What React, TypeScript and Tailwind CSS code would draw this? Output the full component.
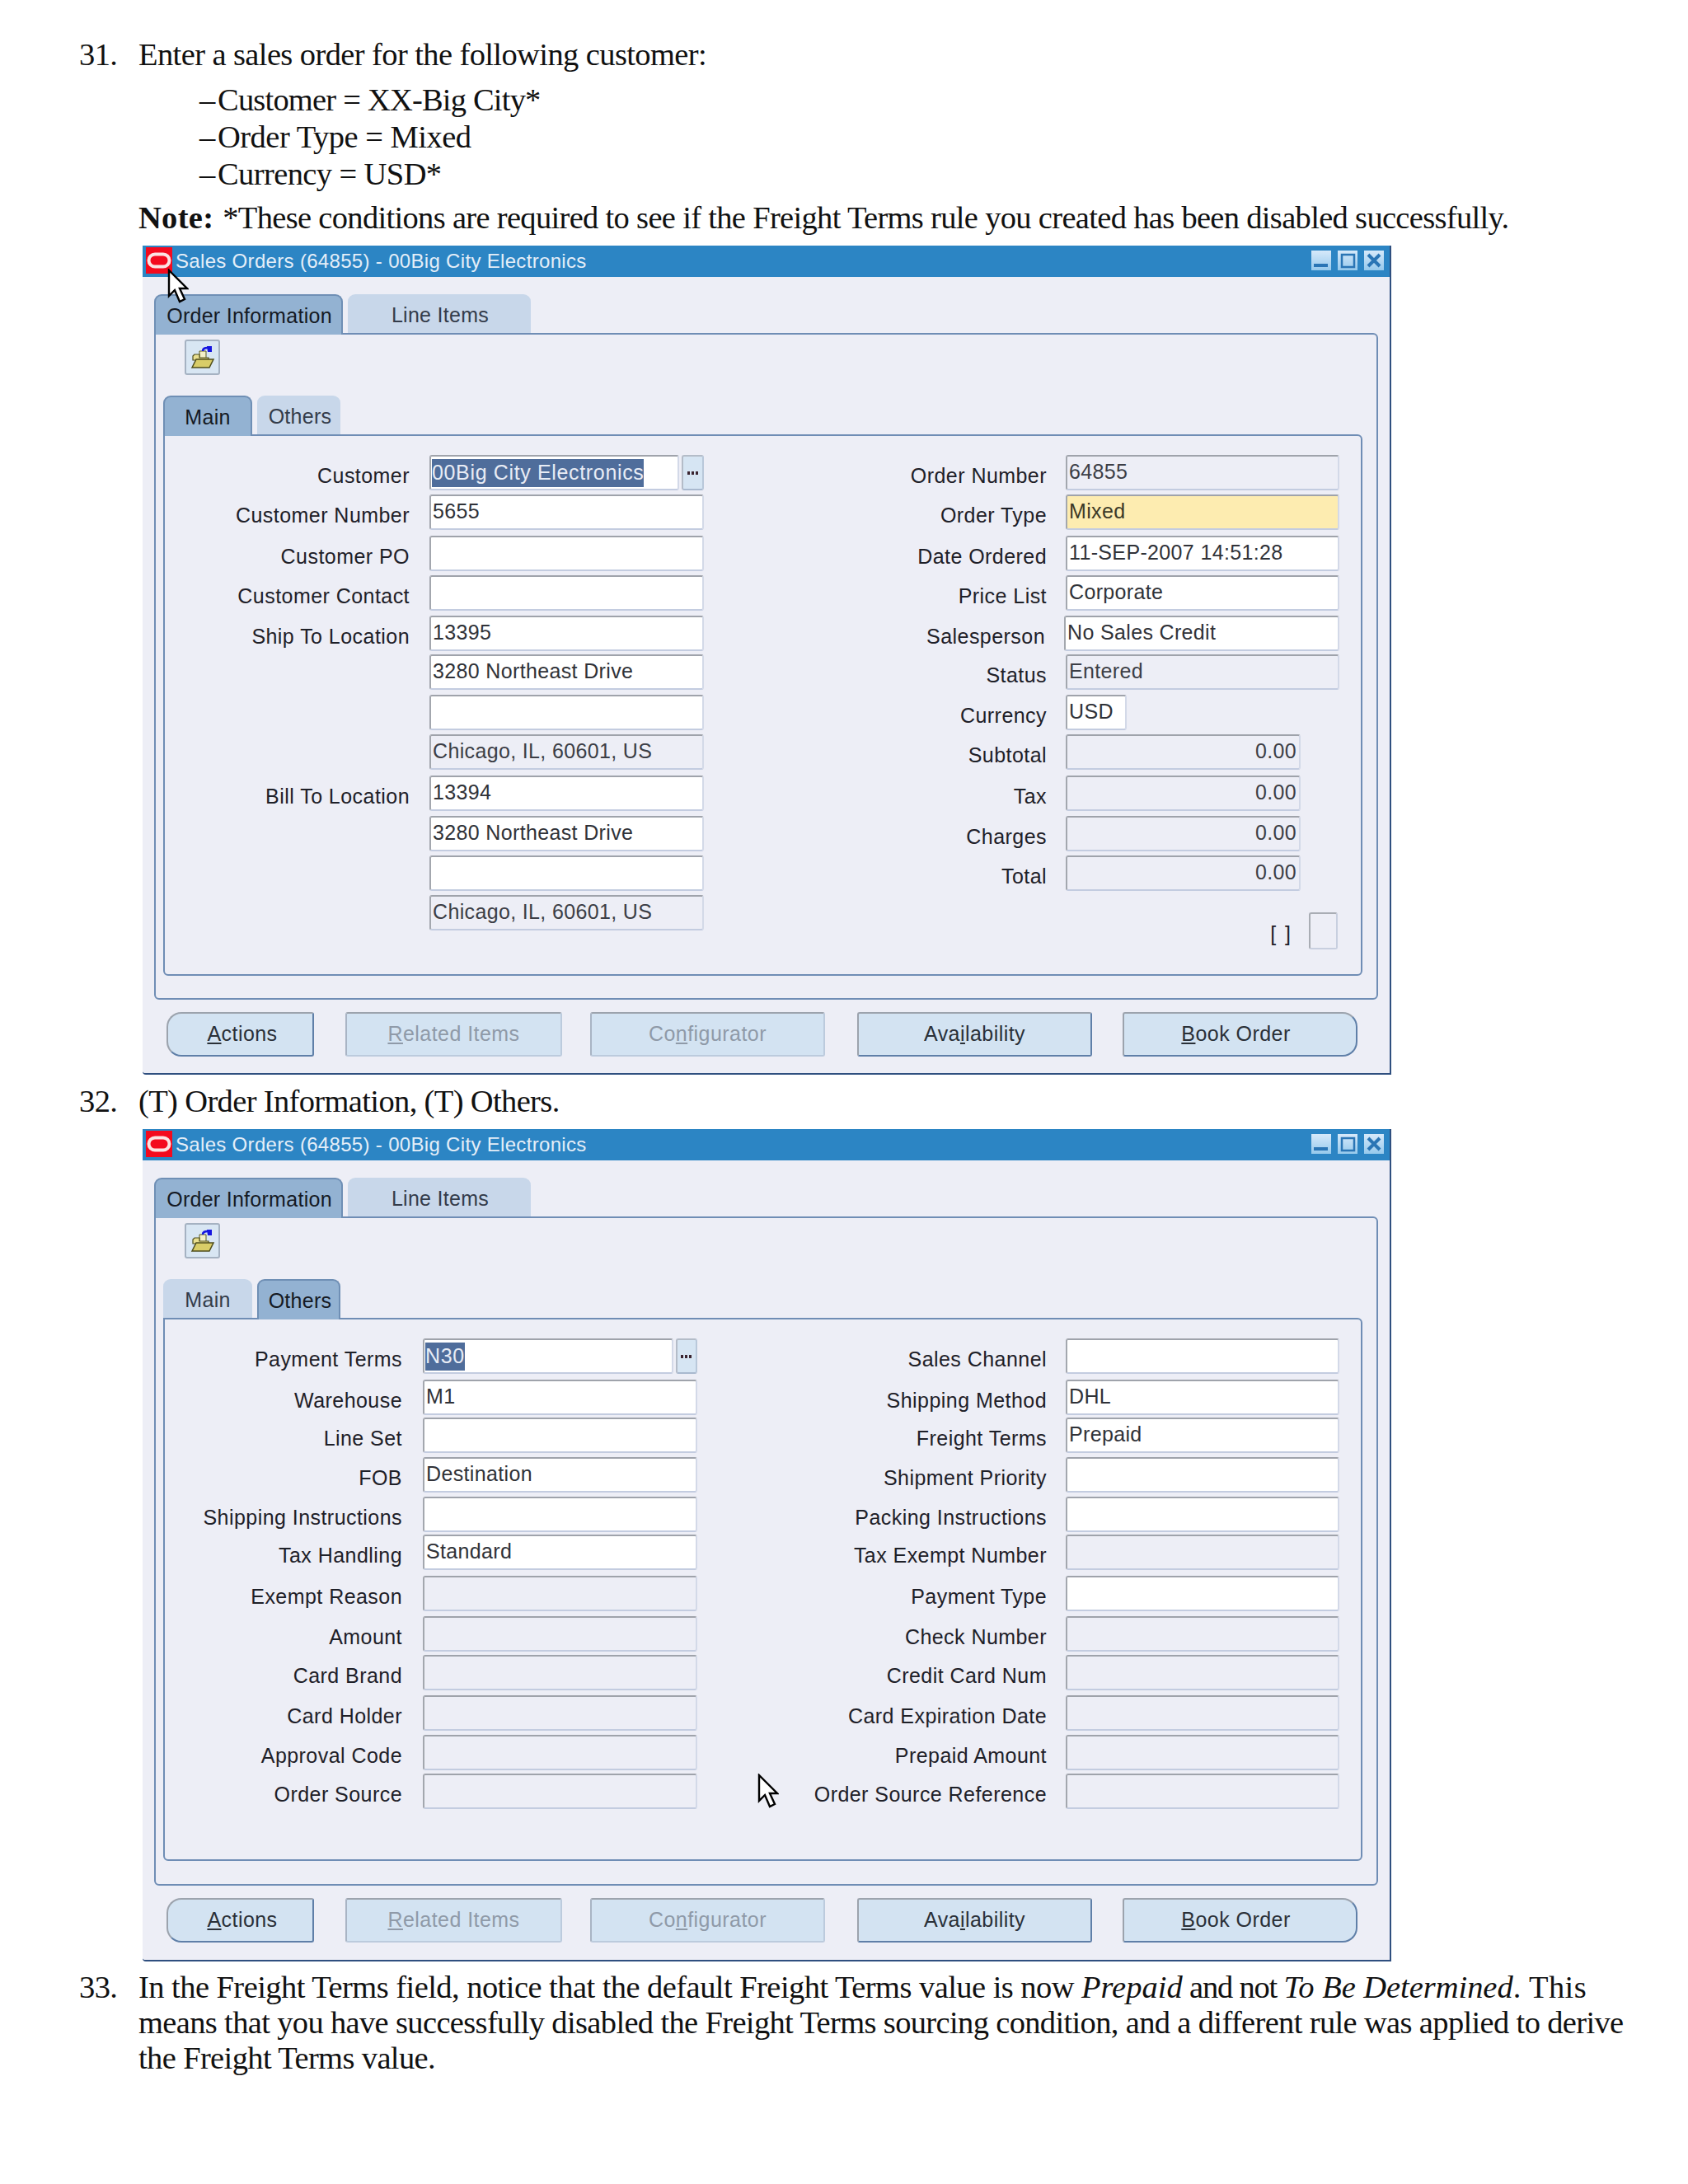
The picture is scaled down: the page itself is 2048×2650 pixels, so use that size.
import React from "react";

type Kind = "edit" | "ro" | "req" | "sel" | "plain";
type Row = { label?: string; value?: string; kind?: Kind; w?: string; right?: boolean; lov?: string; labelX?: string };

const gaps1 = ["mt-0", "mt-[5px]", "mt-[7px]", "mt-[5px]", "mt-[6px]", "mt-[4px]", "mt-[6px]", "mt-[5px]", "mt-[7px]", "mt-[6px]", "mt-[5px]", "mt-[5px]"];
const gaps2 = ["mt-0", "mt-[7px]", "mt-[3px]", "mt-[5px]", "mt-[5px]", "mt-[3px]", "mt-[7px]", "mt-[6px]", "mt-[4px]", "mt-[6px]", "mt-[5px]", "mt-[4px]"];

const fieldBase = "h-[43px] shrink-0 flex items-center border-2 border-t-[#9fa3ab] border-l-[#a3a7ae] border-r-[#d3d9e8] border-b-[#c3cce0] rounded-[3px]";
const kindBg: Record<Kind, string> = {
  edit: "bg-white text-[#303238]",
  ro: "bg-[#edeef6] text-[#3c3e46]",
  req: "bg-[#fdecb0] text-[#3c3a28]",
  sel: "bg-white text-[#e8ecf5]",
  plain: "bg-white",
};

function Field({ row, defW }: { row: Row; defW: string }) {
  const kind = row.kind ?? "edit";
  if (row.lov) {
    return (
      <div className={`flex ${defW} shrink-0 gap-[3px]`}>
        <div className={`${fieldBase} ${kindBg[kind]} ${row.lov} pl-[1px]`}>
          <span className="bg-[#4f6d9b] h-[34px] leading-[32px] tracking-[0.65px]">{row.value}</span>
        </div>
        <div className="h-[43px] flex-1 flex items-center justify-center bg-[#d6e5f3] border-2 border-t-[#b4bcc8] border-l-[#b4bcc8] border-r-[#b9c8da] border-b-[#a9b9cf] rounded-[3px]">
          <svg width="14" height="4" viewBox="0 0 14 4"><rect x="0" width="3" height="4" fill="#3a2430" /><rect x="5" width="3" height="4" fill="#3a2430" /><rect x="10" width="3" height="4" fill="#3a2430" /></svg>
        </div>
      </div>
    );
  }
  return (
    <div className={`${fieldBase} ${kindBg[kind]} ${row.w ?? defW} ${row.right ? "justify-end pr-[3px]" : "pl-[2px]"}`}>
      <span className="-mt-[1px] tracking-[0.35px]">{row.value}</span>
    </div>
  );
}

function Column({ rows, labelW, gap, fieldW, gaps }: { rows: Row[]; labelW: string; gap: string; fieldW: string; gaps: string[] }) {
  return (
    <div className="flex flex-col">
      {rows.map((r, i) => (
        <div key={i} className={`flex ${gap} ${gaps[i]}`}>
          <div className={`${labelW} text-right pt-[10px] leading-[30px] text-[#1e2028] tracking-[0.45px] whitespace-nowrap ${r.labelX ?? ""}`}>{r.label}</div>
          <Field row={r} defW={fieldW} />
        </div>
      ))}
    </div>
  );
}

function TabShape({ active, className, text, children }: { active?: boolean; className: string; text?: string; children: React.ReactNode }) {
  return (
    <div
      className={`${className} flex items-center justify-center rounded-t-[9px] border-t-2 tracking-[0.28px] pt-[2px] ${
        active
          ? "bg-[#93b2d2] border-[#6f8fb5] border-x-2 text-[#151a24] relative z-10 -mb-[2px]"
          : "bg-[#c8d7ea] border-[#c8d7ea] text-[#343c4a]"
      }`}
    >
      <span className={text ?? ""}>{children}</span>
    </div>
  );
}

function Folder() {
  return (
    <svg width="30" height="30" viewBox="0 0 30 30">
      <path d="M11 16 L11 7 L19 7 L19 16 Z" fill="#f4f0c8" stroke="#5b5a20" strokeWidth="1" />
      <path d="M15 7 C15 4 17 3 21 3" fill="none" stroke="#1616e0" strokeWidth="2.6" />
      <path d="M20 1 H26 V8 H21 Z" fill="#1616e0" />
      <path d="M3 13 L5 11 H11 V15 H22 V18 H3 Z" fill="#e9df90" stroke="#4f4e1c" strokeWidth="1.2" />
      <path d="M2 27 L7 17 H28 L23 27 Z" fill="#d9cd68" stroke="#4f4e1c" strokeWidth="1.5" />
    </svg>
  );
}

function Oracle() {
  return (
    <div className="w-[32px] h-[32px] mt-[2px] ml-[4px] bg-[#f40a1e] flex items-center justify-center shrink-0">
      <svg width="30" height="22" viewBox="0 0 30 22">
        <rect x="2.5" y="3.5" width="25" height="15" rx="7.5" fill="none" stroke="#fbe3e3" strokeWidth="4" />
      </svg>
    </div>
  );
}

function WinBtn({ type }: { type: "min" | "max" | "close" }) {
  return (
    <div className="w-[24px] h-[24px] bg-gradient-to-b from-[#d6e9fa] to-[#96c9ec] flex items-center justify-center">
      <svg width="24" height="24" viewBox="0 0 24 24">
        {type === "min" && <rect x="3" y="16" width="17" height="4" fill="#2a75b5" />}
        {type === "max" && <rect x="5" y="5" width="15" height="15" fill="none" stroke="#2a75b5" strokeWidth="2.5" />}
        {type === "close" && <path d="M5 5 L19 19 M19 5 L5 19" stroke="#2a75b5" strokeWidth="4" />}
      </svg>
    </div>
  );
}

function Btn({ w, shape, disabled, text, children }: { w: string; shape?: string; disabled?: boolean; text?: string; children: React.ReactNode }) {
  return (
    <div
      className={`${w} h-[54px] shrink-0 flex items-center justify-center bg-[#d3e3f2] border-2 rounded-[3px] tracking-[0.45px] ${shape ?? ""} ${
        disabled
          ? "text-[#8f9aa8] border-[#a9b4c4] border-t-[#9ca3ad] border-r-[#bccbdd] border-b-[#bccbdd]"
          : "text-[#2a3038] border-t-[#9ca3ad] border-l-[#9ca3ad] border-r-[#5f7fa8] border-b-[#5f7fa8]"
      }`}
    >
      <span className={`-mt-[1px] ${text ?? ""}`}>{children}</span>
    </div>
  );
}

function Cursor({ className }: { className: string }) {
  return (
    <svg className={`absolute z-20 ${className}`} width="26" height="44" viewBox="0 0 26 44">
      <path d="M2 2 V33 L9 26 L15 40 L21 37 L15 24 L24 24 Z" fill="#fff" stroke="#000" strokeWidth="2.4" strokeLinejoin="miter" />
    </svg>
  );
}

function Win({
  others, left, right, labelW, gap, panelH, outerH, cursor, height, gaps,
}: {
  others?: boolean; left: Row[]; right: Row[]; labelW: string; gap: string; panelH: string; outerH: string; cursor: string; height: string; gaps: string[];
}) {
  return (
    <div className={`relative ml-[173px] w-[1515px] ${height} bg-[#edeef6] border-r-2 border-b-2 border-r-[#2f4f7f] border-b-[#2f4f7f] rounded-bl-[4px] flex flex-col`}>
      <div className="h-[38px] shrink-0 bg-[#2c85c4] flex items-start">
        <Oracle />
        <div className="ml-[4px] mt-[5px] leading-[28px] text-[24px] text-[#e4eef8] tracking-[0.32px] whitespace-nowrap">
          Sales Orders (64855) - 00Big City Electronics
        </div>
        <div className="ml-auto mt-[6px] mr-[7px] flex gap-[8px]">
          <WinBtn type="min" />
          <WinBtn type="max" />
          <WinBtn type="close" />
        </div>
      </div>

      <div className="mx-[14px] mt-[21px] h-[47px] flex gap-[6px] shrink-0">
        <TabShape active className="w-[229px]" text="ml-[2px]">Order Information</TabShape>
        <TabShape className="w-[222px]" text="ml-[2px]">Line Items</TabShape>
      </div>

      <div className={`mx-[14px] ${outerH} border-2 border-[#6f8db5] rounded-b-[6px] rounded-tr-[6px] flex flex-col`}>
        <div className="ml-[35px] mt-[6px] w-[43px] h-[43px] shrink-0 bg-[#d8e6f3] border-2 border-[#a5b2c2] rounded-[3px] flex items-center justify-center">
          <Folder />
        </div>
        <div className="ml-[9px] mt-[25px] h-[47px] flex gap-[6px] shrink-0">
          <TabShape active={!others} className="w-[108px]">Main</TabShape>
          <TabShape active={others} className="w-[101px]" text="ml-[3px]">Others</TabShape>
        </div>
        <div className={`ml-[9px] mr-[17px] ${panelH} border-2 border-[#6f8db5] rounded-b-[6px] rounded-tr-[6px] pt-[23px] pr-[26px] flex justify-between`}>
          <Column rows={left} labelW={labelW} gap={gap} fieldW="w-[333px]" gaps={gaps} />
          <div className="flex flex-col items-end">
            <Column rows={right} labelW="w-[400px]" gap="gap-[23px]" fieldW="w-[332px]" gaps={gaps} />
            {!others && (
              <div className="mt-[26px] mr-[2px] flex items-center gap-[20px] ">
                <span className="pt-[8px] tracking-[2px] text-[#1e2028]">[ ]</span>
                <div className="w-[35px] h-[45px] border-2 border-t-[#a9adb4] border-l-[#a9adb4] border-r-[#c8cfdf] border-b-[#c8cfdf] rounded-[3px]" />
              </div>
            )}
          </div>
        </div>
      </div>

      <div className="mx-[29px] mt-[15px] flex justify-between pr-[10px]">
        <Btn w="w-[179px]" shape="rounded-l-[18px]" text="ml-[5px]"><u>A</u>ctions</Btn>
        <Btn w="w-[263px] ml-[38px]" disabled><u>R</u>elated Items</Btn>
        <Btn w="w-[285px] ml-[34px]" disabled>Co<u>n</u>figurator</Btn>
        <Btn w="w-[285px] ml-[39px]">Ava<u>i</u>lability</Btn>
        <Btn w="w-[285px] ml-[37px]" shape="rounded-r-[18px]" text="mr-[10px]"><u>B</u>ook Order</Btn>
      </div>
      <Cursor className={cursor} />
    </div>
  );
}

const win1L: Row[] = [
  { label: "Customer", value: "00Big City Electronics", kind: "sel", lov: "w-[303px]" },
  { label: "Customer Number", value: "5655" },
  { label: "Customer PO" },
  { label: "Customer Contact" },
  { label: "Ship To Location", value: "13395" },
  { value: "3280 Northeast Drive" },
  {},
  { value: "Chicago, IL, 60601, US", kind: "ro" },
  { label: "Bill To Location", value: "13394" },
  { value: "3280 Northeast Drive" },
  {},
  { value: "Chicago, IL, 60601, US", kind: "ro" },
];
const win1R: Row[] = [
  { label: "Order Number", value: "64855", kind: "ro" },
  { label: "Order Type", value: "Mixed", kind: "req" },
  { label: "Date Ordered", value: "11-SEP-2007 14:51:28" },
  { label: "Price List", value: "Corporate" },
  { label: "Salesperson", value: "No Sales Credit", labelX: "-ml-[2px]", w: "w-[334px]" },
  { label: "Status", value: "Entered", kind: "ro" },
  { label: "Currency", value: "USD", w: "w-[74px] mr-[258px]" },
  { label: "Subtotal", value: "0.00", kind: "ro", w: "w-[285px] mr-[47px]", right: true },
  { label: "Tax", value: "0.00", kind: "ro", w: "w-[285px] mr-[47px]", right: true },
  { label: "Charges", value: "0.00", kind: "ro", w: "w-[285px] mr-[47px]", right: true },
  { label: "Total", value: "0.00", kind: "ro", w: "w-[285px] mr-[47px]", right: true },
];
const win2L: Row[] = [
  { label: "Payment Terms", value: "N30", kind: "sel", lov: "w-[304px]" },
  { label: "Warehouse", value: "M1" },
  { label: "Line Set" },
  { label: "FOB", value: "Destination" },
  { label: "Shipping Instructions" },
  { label: "Tax Handling", value: "Standard" },
  { label: "Exempt Reason", kind: "ro" },
  { label: "Amount", kind: "ro" },
  { label: "Card Brand", kind: "ro" },
  { label: "Card Holder", kind: "ro" },
  { label: "Approval Code", kind: "ro" },
  { label: "Order Source", kind: "ro" },
];
const win2R: Row[] = [
  { label: "Sales Channel" },
  { label: "Shipping Method", value: "DHL" },
  { label: "Freight Terms", value: "Prepaid" },
  { label: "Shipment Priority" },
  { label: "Packing Instructions" },
  { label: "Tax Exempt Number", kind: "ro" },
  { label: "Payment Type" },
  { label: "Check Number", kind: "ro" },
  { label: "Credit Card Num", kind: "ro" },
  { label: "Card Expiration Date", kind: "ro" },
  { label: "Prepaid Amount", kind: "ro" },
  { label: "Order Source Reference", kind: "ro" },
];

const line = "flex leading-[45px] whitespace-nowrap";
const serif = "[font-family:'Liberation_Serif',serif]";
const num = "w-[168px] pl-[96px] shrink-0 tracking-[-0.6px]";
const dash = "w-[22px] shrink-0";

export default function App() {
  return (
    <div className="w-[2048px] h-[2650px] bg-white text-[#111] overflow-hidden [font-family:'Liberation_Sans',Arial,sans-serif] text-[25px]">
      <div className={`${serif} text-[38.5px] pt-[44px]`}>
        <div className={line}>
          <span className={num}>31.</span>
          <span className="tracking-[-0.6px]">Enter a sales order for the following customer:</span>
        </div>
        <div className={`${line} pl-[242px] mt-[10px]`}><span className={dash}>–</span><span className="tracking-[-0.8px]">Customer = XX-Big City*</span></div>
        <div className={`${line} pl-[242px]`}><span className={dash}>–</span><span className="tracking-[-0.5px]">Order Type = Mixed</span></div>
        <div className={`${line} pl-[242px]`}><span className={dash}>–</span><span className="tracking-[-0.6px]">Currency = USD*</span></div>
        <div className={`${line} pl-[168px] mt-[8px] tracking-[-0.68px]`}>
          <b className="mr-[11px] tracking-[0.3px]">Note:</b>*These conditions are required to see if the Freight Terms rule you created has been disabled successfully.
        </div>
      </div>
      <div className="mt-[11px]">
        <Win left={win1L} right={win1R} labelW="w-[297px]" gap="gap-[24px]" panelH="h-[657px]" outerH="h-[809px]" cursor="left-[30px] top-[28px]" height="h-[1006px]" gaps={gaps1} />
      </div>
      <div className={`${serif} text-[38.5px] mt-[10px] ${line}`}>
        <span className={num}>32.</span>
        <span className="tracking-[-0.64px]">(T) Order Information, (T) Others.</span>
      </div>
      <div className="mt-[11px]">
        <Win others left={win2L} right={win2R} labelW="w-[288px]" gap="gap-[25px]" panelH="h-[659px]" outerH="h-[812px]" cursor="left-[746px] top-[782px]" height="h-[1010px]" gaps={gaps2} />
      </div>
      <div className={`${serif} text-[38.5px] mt-[9px]`}>
        <div className={line}>
          <span className={num}>33.</span>
          <span>
            <span className="tracking-[-0.55px]">In the Freight Terms field, notice that the default Freight Terms value is now </span>
            <i>Prepaid</i>
            <span className="tracking-[-1.2px]"> and not </span>
            <i className="tracking-[-0.04px]">To Be Determined</i>
            <span className="tracking-[0.4px]">. This</span>
          </span>
        </div>
        <div className={`${line} pl-[168px] -mt-[2px] tracking-[-0.65px]`}>means that you have successfully disabled the Freight Terms sourcing condition, and a different rule was applied to derive</div>
        <div className={`${line} pl-[168px] -mt-[2px] tracking-[-0.63px]`}>the Freight Terms value.</div>
      </div>
    </div>
  );
}
